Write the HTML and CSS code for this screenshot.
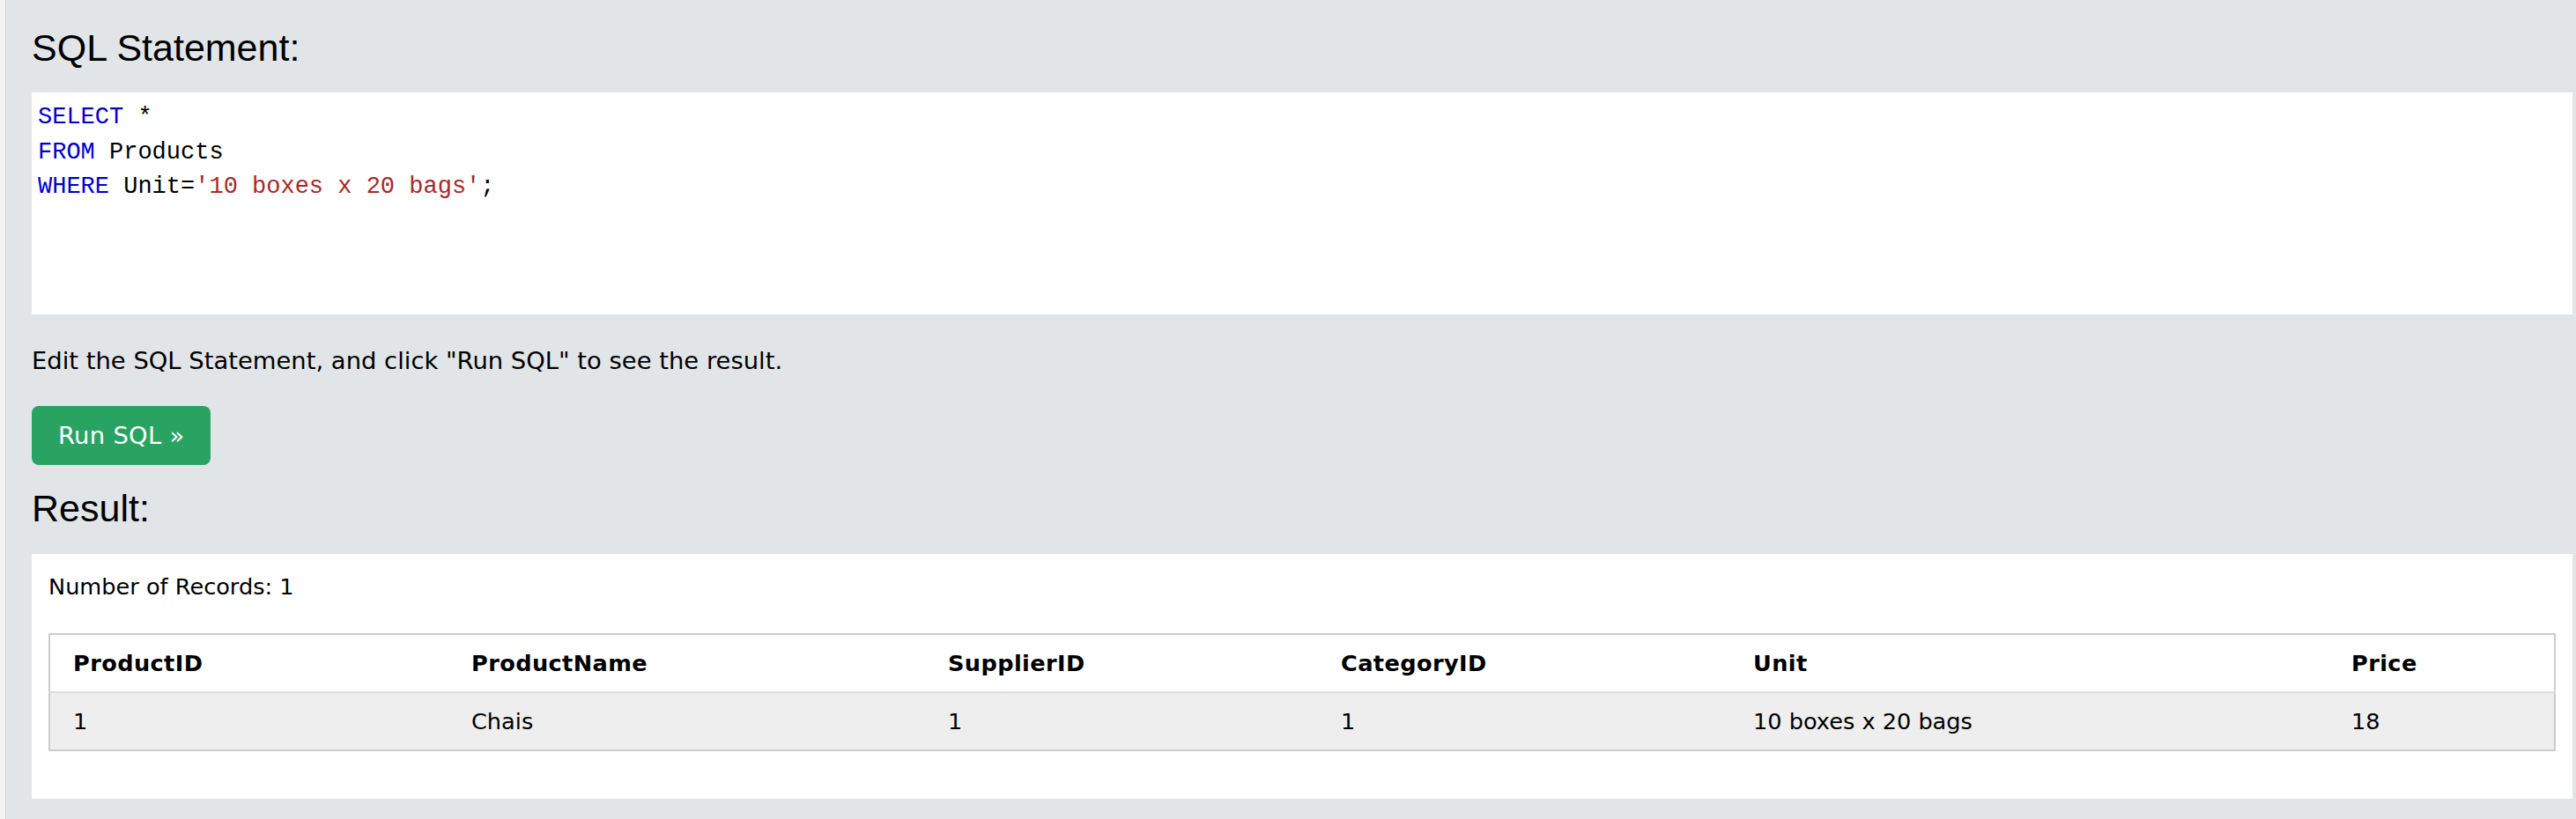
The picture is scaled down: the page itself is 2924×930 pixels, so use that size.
FILE: index.html
```html
<!DOCTYPE html>
<html lang="en">
<head>
<meta charset="utf-8">
<title>SQL Tryit</title>
<link rel="stylesheet" href="styles.css">
</head>
<body>
<div class="page">
  <div class="gutter"></div>
  <main class="panel">
    <h2 class="title">SQL Statement:</h2>
    <div class="code"><div class="code-line"><span class="kw">SELECT</span> *</div><div class="code-line"><span class="kw">FROM</span> Products</div><div class="code-line"><span class="kw">WHERE</span> Unit=<span class="str">'10 boxes x 20 bags'</span>;</div></div>
    <p class="hint">Edit the SQL Statement, and click "Run SQL" to see the result.</p>
    <button class="run-btn" type="button">Run SQL »</button>
    <h2 class="title result-title">Result:</h2>
    <section class="result">
      <div class="records">Number of Records: 1</div>
      <table class="grid">
        <colgroup>
          <col class="c1"><col class="c2"><col class="c3"><col class="c4"><col class="c5"><col class="c6">
        </colgroup>
        <tr class="head"><th>ProductID</th><th>ProductName</th><th>SupplierID</th><th>CategoryID</th><th>Unit</th><th>Price</th></tr>
        <tr class="row"><td>1</td><td>Chais</td><td>1</td><td>1</td><td>10 boxes x 20 bags</td><td>18</td></tr>
      </table>
    </section>
  </main>
</div>
</body>
</html>
```
FILE: styles.css
```css
html, body {
  margin: 0;
  padding: 0;
  background: #e2e5e8;
}
body {
  font-family: "DejaVu Sans", Verdana, sans-serif;
  color: #000;
}
.page {
  display: flex;
  min-height: 930px;
}
.gutter {
  width: 6px;
  flex: none;
  background: #f2f2f2;
  border-right: 1px solid #d2d5d8;
}
.panel {
  flex: 1;
  padding: 30px 4px 23px 29px;
  display: flex;
  flex-direction: column;
  align-items: flex-start;
}
.title {
  font-family: "Liberation Sans", Arial, sans-serif;
  font-weight: normal;
  font-size: 43px;
  line-height: 49.45px;
  margin: 0;
}
.code {
  align-self: stretch;
  box-sizing: border-box;
  height: 252px;
  margin-top: 26px;
  background: #fff;
  padding: 9px 7px;
  font-family: "Liberation Mono", "Courier New", monospace;
  font-size: 27px;
  line-height: 39.5px;
  white-space: pre;
  color: #000;
}
.kw { color: #0000cd; }
.str { color: #a52a2a; }
.hint {
  margin: 32.4px 0 0;
  font-size: 27.4px;
  line-height: 40px;
}
.run-btn {
  margin-top: 31.4px;
  height: 67px;
  padding: 0 29px 0 30px;
  border: 0;
  border-radius: 8px;
  background: #29a362;
  color: #fff;
  font-family: "DejaVu Sans", Verdana, sans-serif;
  font-size: 27.4px;
  letter-spacing: 0.3px;
  line-height: 67px;
  white-space: nowrap;
}
.result-title {
  margin-top: 24.4px;
}
.result {
  align-self: stretch;
  margin-top: 27px;
  background: #fff;
  padding: 19px 19px 54px;
}
.records {
  font-size: 25.6px;
  line-height: 37px;
}
.grid {
  margin-top: 34px;
  width: 100%;
  table-layout: fixed;
  border-collapse: collapse;
  border: 2px solid #cccccc;
  font-size: 25.6px;
}
.c1 { width: 453px; }
.c2 { width: 541px; }
.c3 { width: 446px; }
.c4 { width: 468px; }
.c5 { width: 679px; }
.c6 { width: auto; }
.grid th, .grid td {
  text-align: left;
  padding: 0 0 0 26px;
  height: 64px;
  vertical-align: middle;
  white-space: nowrap;
}
.grid th {
  font-weight: bold;
  letter-spacing: 0.4px;
}
.head { border-bottom: 2px solid #dddddd; }
.row { background: #eeeeee; }
```
